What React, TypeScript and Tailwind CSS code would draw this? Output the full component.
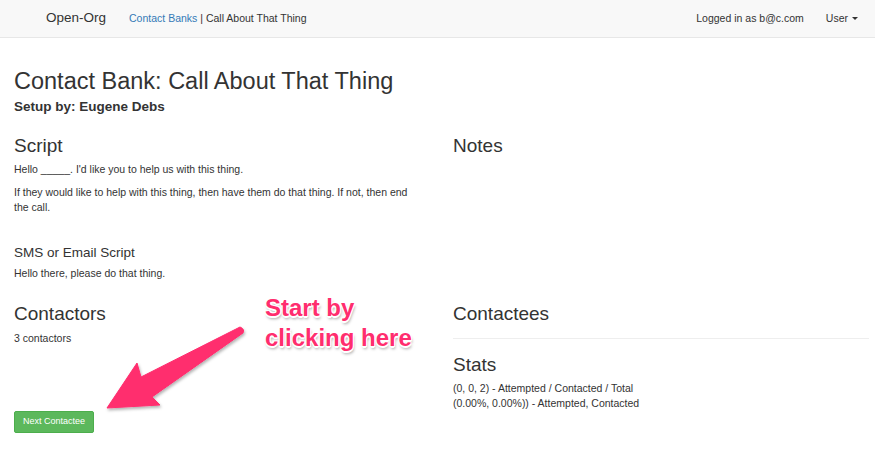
import React from "react";

const font = "font-['Liberation_Sans',Arial,sans-serif]";

function Navbar() {
  return (
    <nav className="flex h-[38px] items-center border-b border-[#e7e7e7] bg-[#f8f8f8] text-[10.5px] text-[#333]">
      <span className="ml-[46px] text-[13.5px] text-[#333]">Open-Org</span>
      <span className="ml-[23px]">
        <a href="#" className="text-[#337ab7]">
          Contact Banks
        </a>{" "}
        | Call About That Thing
      </span>
      <span className="ml-auto">Logged in as b@c.com</span>
      <span className="ml-[22px] mr-[17px] flex items-center gap-[4px]">
        User
        <span className="inline-block border-x-[3px] border-t-[3px] border-x-transparent border-t-[#333]" />
      </span>
    </nav>
  );
}

function Annotation() {
  return (
    <>
      <svg
        className="pointer-events-none absolute left-0 top-0"
        width={875}
        height={458}
        viewBox="0 0 875 458"
      >
        <defs>
          <filter id="sh" x="-20%" y="-20%" width="140%" height="140%">
            <feDropShadow dx="1" dy="2" stdDeviation="1.5" floodColor="#000" floodOpacity="0.3" />
          </filter>
        </defs>
        <path
          d="M107 408 L137 363 L141 377 L240 327 Q245 329 243 333 L152 397 L160 405 Z"
          fill="#ff2d6e"
          stroke="#ff2d6e"
          strokeWidth="1"
          strokeLinejoin="round"
          filter="url(#sh)"
        />
      </svg>
      <div className="pointer-events-none absolute left-[265px] top-[293px] text-[24px] font-bold leading-[30px] text-[#ff2d6e] [text-shadow:1px_1px_0_#fff,-1px_-1px_0_#fff,1px_-1px_0_#fff,-1px_1px_0_#fff,0_2px_0_#fff,1px_3px_3px_rgba(0,0,0,0.35)]">
        Start by
        <br />
        clicking here
      </div>
    </>
  );
}

export default function App() {
  return (
    <div className={`relative h-[458px] w-[875px] overflow-hidden bg-white text-[#333] ${font}`}>
      <Navbar />
      <main className="pl-[14px] pr-[6px]">
        <h1 className="mt-[28px] text-[23.5px] leading-[30px]">Contact Bank: Call About That Thing</h1>
        <h4 className="mt-[3px] text-[13.5px] font-bold leading-[15px]">Setup by: Eugene Debs</h4>

        <div className="mt-[19px] grid grid-cols-[408px_1fr] gap-x-[31px]">
          <div>
            <h2 className="text-[19px] leading-[25px]">Script</h2>
            <p className="mt-[4px] text-[10.5px] leading-[15px]">
              Hello _____. I&apos;d like you to help us with this thing.
            </p>
            <p className="mt-[8px] text-[10.5px] leading-[15px]">
              If they would like to help with this thing, then have them do that thing. If not, then end the call.
            </p>
            <h4 className="mt-[30px] text-[13.5px] leading-[15px]">SMS or Email Script</h4>
            <p className="mt-[6px] text-[10.5px] leading-[15px]">Hello there, please do that thing.</p>
          </div>
          <div>
            <h2 className="text-[19px] leading-[25px]">Notes</h2>
          </div>
        </div>

        <div className="mt-[20px] grid grid-cols-[408px_1fr] gap-x-[31px]">
          <div>
            <h2 className="text-[19px] leading-[25px]">Contactors</h2>
            <p className="mt-[5px] text-[10.5px] leading-[15px]">3 contactors</p>
            <button
              type="button"
              className="mt-[65px] h-[22px] w-[80px] rounded-[2px] border border-[#4cae4c] bg-[#5cb85c] text-[9px] text-white"
            >
              Next Contactee
            </button>
          </div>
          <div>
            <h2 className="text-[19px] leading-[25px]">Contactees</h2>
            <hr className="mt-[12px] border-t border-[#eee]" />
            <h2 className="mt-[13px] text-[19px] leading-[25px]">Stats</h2>
            <p className="mt-[4px] text-[10.5px] leading-[15px]">
              (0, 0, 2) - Attempted / Contacted / Total
              <br />
              (0.00%, 0.00%)) - Attempted, Contacted
            </p>
          </div>
        </div>
      </main>
      <Annotation />
    </div>
  );
}
